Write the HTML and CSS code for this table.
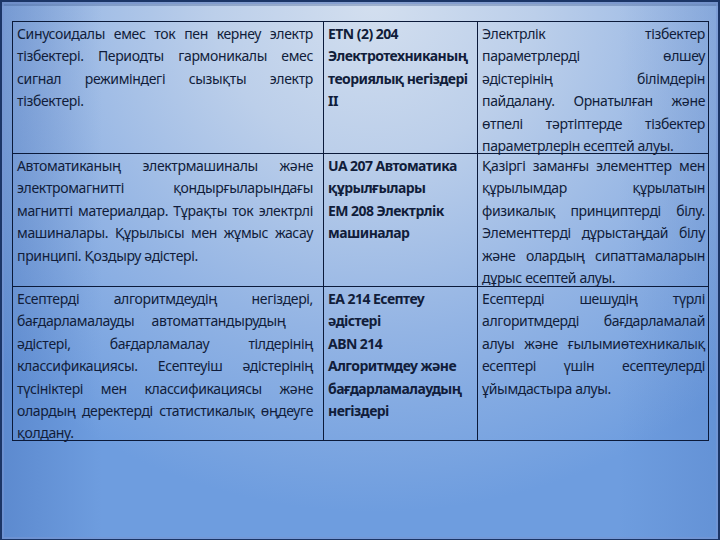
FILE: index.html
```html
<!DOCTYPE html>
<html lang="kk">
<head>
<meta charset="utf-8">
<title>Пәндер</title>
<link rel="stylesheet" href="styles.css">
</head>
<body>
<div class="slide">
  <div class="grid">
    <div class="cell c1">
      <span class="ln j">Синусоидалы емес ток пен кернеу электр</span>
      <span class="ln j">тізбектері. Периодты гармоникалы емес</span>
      <span class="ln j">сигнал режиміндегі сызықты электр</span>
      <span class="ln">тізбектері.</span>
    </div>
    <div class="cell c2">
      <span class="ln">ETN (2) 204</span>
      <span class="ln">Электротехниканың</span>
      <span class="ln">теориялық негіздері</span>
      <span class="ln">II</span>
    </div>
    <div class="cell c3">
      <span class="ln j">Электрлік тізбектер</span>
      <span class="ln j">параметрлерді өлшеу</span>
      <span class="ln j">әдістерінің білімдерін</span>
      <span class="ln j">пайдалану. Орнатылған және</span>
      <span class="ln j">өтпелі тәртіптерде тізбектер</span>
      <span class="ln">параметрлерін есептей алуы.</span>
    </div>

    <div class="cell c1">
      <span class="ln j">Автоматиканың электрмашиналы және</span>
      <span class="ln j">электромагнитті қондырғыларындағы</span>
      <span class="ln j">магнитті материалдар. Тұрақты ток электрлі</span>
      <span class="ln j">машиналары. Құрылысы мен жұмыс жасау</span>
      <span class="ln">принципі. Қоздыру әдістері.</span>
    </div>
    <div class="cell c2">
      <span class="ln">UA 207 Автоматика</span>
      <span class="ln">құрылғылары</span>
      <span class="ln">EM 208 Электрлік</span>
      <span class="ln">машиналар</span>
    </div>
    <div class="cell c3">
      <span class="ln j">Қазіргі заманғы элементтер мен</span>
      <span class="ln j">құрылымдар құрылатын</span>
      <span class="ln j">физикалық принциптерді білу.</span>
      <span class="ln j">Элементтерді дұрыстаңдай білу</span>
      <span class="ln j">және олардың сипаттамаларын</span>
      <span class="ln">дұрыс есептей алуы.</span>
    </div>

    <div class="cell c1">
      <span class="ln j">Есептерді алгоритмдеудің негіздері,</span>
      <span class="ln wide">бағдарламалауды автоматтандырудың</span>
      <span class="ln j">әдістері, бағдарламалау тілдерінің</span>
      <span class="ln j">классификациясы. Есептеуіш әдістерінің</span>
      <span class="ln j">түсініктері мен классификациясы және</span>
      <span class="ln j">олардың деректерді статистикалық өңдеуге</span>
      <span class="ln">қолдану.</span>
    </div>
    <div class="cell c2">
      <span class="ln">EA 214 Есептеу</span>
      <span class="ln">әдістері</span>
      <span class="ln">ABN 214</span>
      <span class="ln">Алгоритмдеу және</span>
      <span class="ln">бағдарламалаудың</span>
      <span class="ln">негіздері</span>
    </div>
    <div class="cell c3">
      <span class="ln j">Есептерді шешудің түрлі</span>
      <span class="ln j">алгоритмдерді бағдарламалай</span>
      <span class="ln j">алуы және ғылымиөтехникалық</span>
      <span class="ln j">есептері үшін есептеулерді</span>
      <span class="ln">ұйымдастыра алуы.</span>
    </div>
  </div>
</div>
</body>
</html>
```

FILE: styles.css
```css
html, body {
  margin: 0;
  padding: 0;
}

body {
  width: 720px;
  height: 540px;
  background: #1b3566;
  overflow: hidden;
}

.slide {
  box-sizing: border-box;
  width: 716px;
  height: 537px;
  margin: 2px 2px 0 2px;
  padding: 19px 0 0 10px;
  background:
    linear-gradient(to right, rgba(30, 70, 150, 0.22) 0%, rgba(30, 70, 150, 0) 14%, rgba(30, 70, 150, 0) 86%, rgba(30, 70, 150, 0.12) 100%),
    radial-gradient(ellipse 75% 95% at 52% 0%, #d3dfef 0%, #bccfea 30%, #93b4e4 65%, #6e9ddf 100%);
  box-shadow: inset 0 0 0 2px rgba(120, 150, 210, 0.6), inset 0 4px 0 0 rgba(60, 90, 140, 0.35);
  font-family: "Noto Sans", "Open Sans", sans-serif;
  font-size: 14px;
  letter-spacing: -0.35px;
  color: #111d3a;
}

.grid {
  display: grid;
  grid-template-columns: 311px 154px 231px;
  grid-template-rows: 132px 133px 154px;
  width: 696px;
  border-top: 1.5px solid #0b1a3a;
  border-left: 1.5px solid #0b1a3a;
}

.cell {
  border-right: 1.5px solid #0b1a3a;
  border-bottom: 1.5px solid #0b1a3a;
  padding-top: 1px;
  line-height: 22.4px;
  min-width: 0;
}

.c1 {
  padding-left: 4px;
  padding-right: 10px;
}

.c2 {
  padding-left: 4px;
  padding-right: 2px;
  font-weight: 700;
  letter-spacing: -0.55px;
}

.c3 {
  padding-left: 4px;
  padding-right: 3px;
}

.ln {
  display: block;
  white-space: nowrap;
}

.ln.j {
  text-align: justify;
  text-align-last: justify;
  white-space: normal;
}

.ln.wide {
  word-spacing: 14px;
}
```
